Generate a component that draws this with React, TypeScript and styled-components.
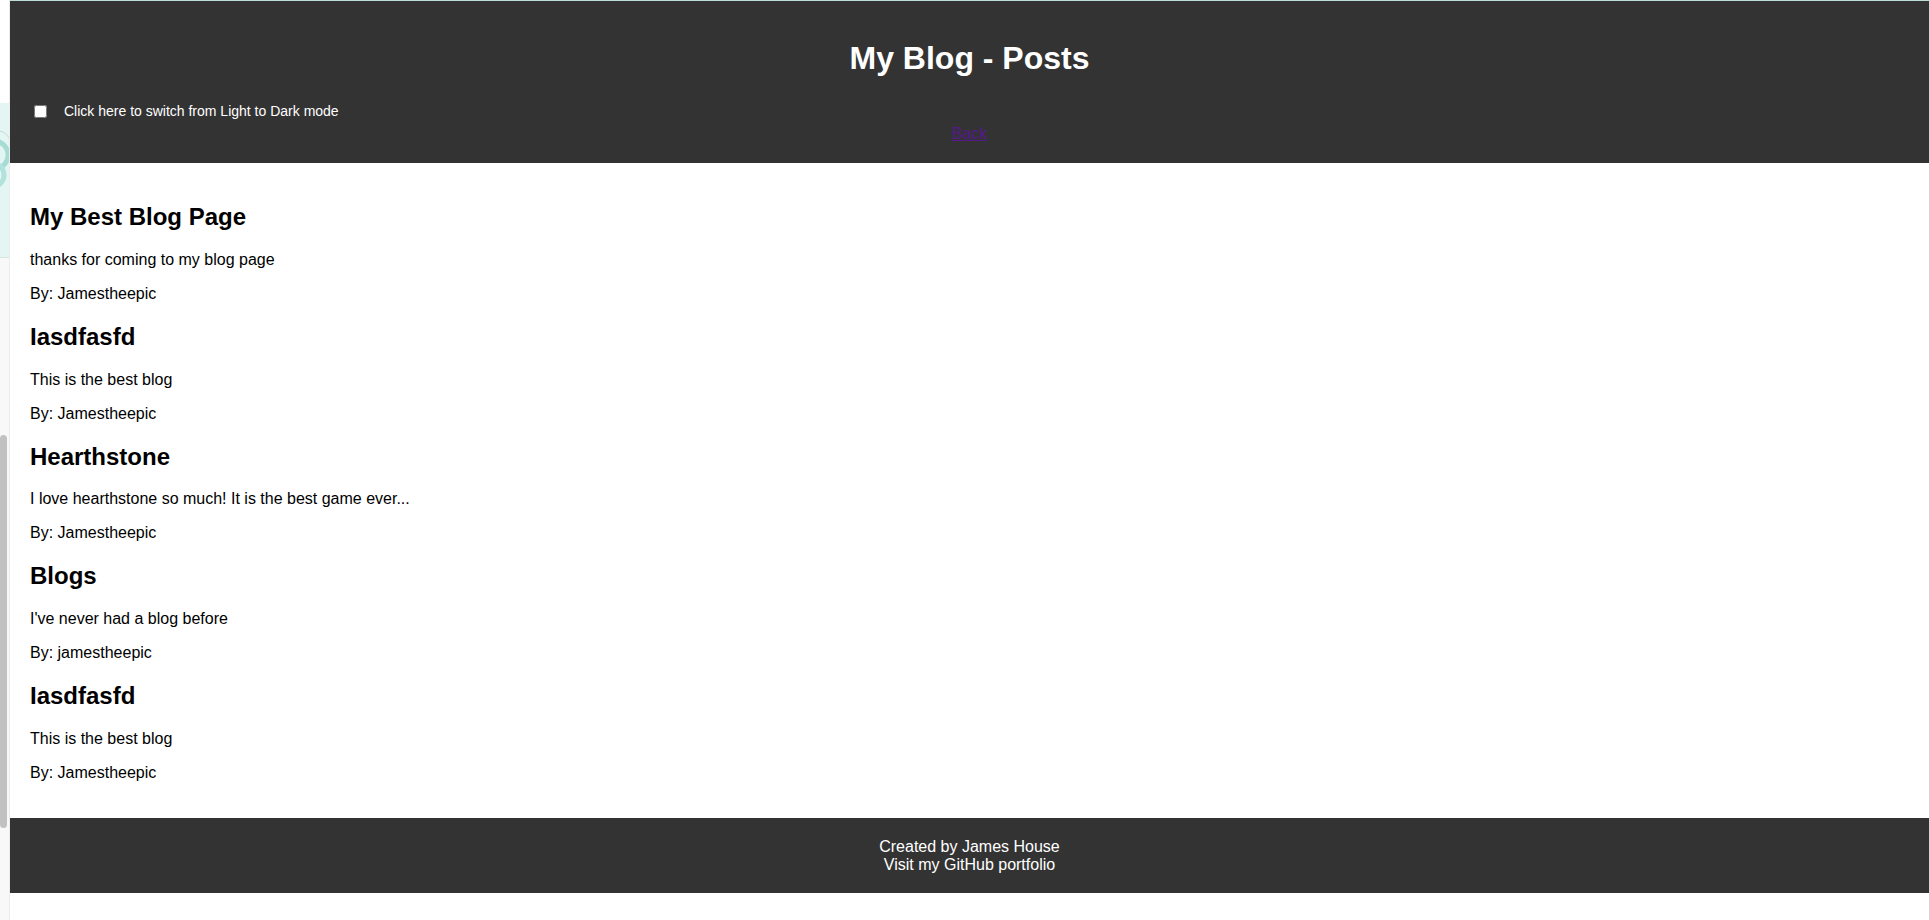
import React from "react";
import styled, { createGlobalStyle } from "styled-components";

const GlobalStyle = createGlobalStyle`
  html, body {
    margin: 0;
    padding: 0;
    background: #ffffff;
    font-family: "Liberation Sans", Arial, Helvetica, sans-serif;
  }
  * { box-sizing: border-box; }
`;

const Page = styled.div`
  display: flex;
  width: 1930px;
  min-height: 920px;
  background: #ffffff;
`;

const SideStrip = styled.div`
  width: 10px;
  display: flex;
  flex-direction: column;
  flex-shrink: 0;
  border-right: 1px solid #ececec;
`;

const StripTop = styled.div`
  height: 103px;
  background: #ffffff;
`;

const StripTeal = styled.div`
  height: 155px;
  background: #e4f6f4;
  border-bottom: 1px solid #d6e4e2;
  overflow: hidden;
`;

const StripBody = styled.div`
  flex: 1;
  background: #f8f8f8;
  display: flex;
  flex-direction: column;
`;

const ScrollThumb = styled.div`
  margin-top: 177px;
  width: 7px;
  height: 393px;
  border-radius: 4px;
  background: #c1c1c1;
`;

const Main = styled.div`
  flex: 1;
  display: flex;
  flex-direction: column;
  border-top: 1px solid #bcdcd8;
  border-right: 1px solid #d4d4d4;
  background: #ffffff;
`;

const Header = styled.header`
  background: #333333;
  color: #ffffff;
  padding: 39px 20px 20px 20px;
`;

const Title = styled.h1`
  margin: 0;
  font-size: 32px;
  font-weight: bold;
  text-align: center;
  line-height: normal;
`;

const ToggleRow = styled.label`
  margin-top: 24px;
  height: 20px;
  display: flex;
  align-items: center;
  gap: 17px;
  font-size: 14px;
  line-height: 16px;
  color: #ffffff;
`;

const Toggle = styled.input`
  margin: 0 0 0 4px;
  width: 13px;
  height: 13px;
`;

const BackLink = styled.a`
  display: block;
  margin-top: 4px;
  text-align: center;
  font-size: 16px;
  line-height: normal;
  color: #551a8b;
  text-decoration: underline;
`;

const Content = styled.main`
  padding: 20px;
`;

const PostTitle = styled.h2`
  margin: 19.92px 0;
  font-size: 24px;
  font-weight: bold;
  color: #000000;
  line-height: normal;
`;

const PostText = styled.p`
  margin: 16px 0;
  font-size: 16px;
  color: #000000;
  line-height: normal;
`;

const Footer = styled.footer`
  background: #333333;
  color: #ffffff;
  padding: 19.5px 20px;
  text-align: center;
  font-size: 16px;
  line-height: normal;
`;

const FooterLine = styled.div``;

const posts = [
  { title: "My Best Blog Page", body: "thanks for coming to my blog page", author: "Jamestheepic" },
  { title: "Iasdfasfd", body: "This is the best blog", author: "Jamestheepic" },
  { title: "Hearthstone", body: "I love hearthstone so much! It is the best game ever...", author: "Jamestheepic" },
  { title: "Blogs", body: "I've never had a blog before", author: "jamestheepic" },
  { title: "Iasdfasfd", body: "This is the best blog", author: "Jamestheepic" },
];

function StripDecor() {
  return (
    <svg width="10" height="155" viewBox="0 0 10 155">
      <circle cx="-6" cy="52" r="14" fill="none" stroke="#a7dcd5" strokeWidth="5" />
      <circle cx="-8" cy="72" r="12" fill="none" stroke="#b3e2dc" strokeWidth="5" />
      <path d="M0 28 Q8 30 10 38" fill="none" stroke="#c9d6d4" strokeWidth="1" />
    </svg>
  );
}

export default function App() {
  return (
    <>
      <GlobalStyle />
      <Page>
        <SideStrip>
          <StripTop />
          <StripTeal>
            <StripDecor />
          </StripTeal>
          <StripBody>
            <ScrollThumb />
          </StripBody>
        </SideStrip>
        <Main>
          <Header>
            <Title>My Blog - Posts</Title>
            <ToggleRow>
              <Toggle type="checkbox" />
              <span>Click here to switch from Light to Dark mode</span>
            </ToggleRow>
            <BackLink href="#">Back</BackLink>
          </Header>
          <Content>
            {posts.map((p, i) => (
              <article key={i}>
                <PostTitle>{p.title}</PostTitle>
                <PostText>{p.body}</PostText>
                <PostText>By: {p.author}</PostText>
              </article>
            ))}
          </Content>
          <Footer>
            <FooterLine>Created by James House</FooterLine>
            <FooterLine>Visit my GitHub portfolio</FooterLine>
          </Footer>
        </Main>
      </Page>
    </>
  );
}
